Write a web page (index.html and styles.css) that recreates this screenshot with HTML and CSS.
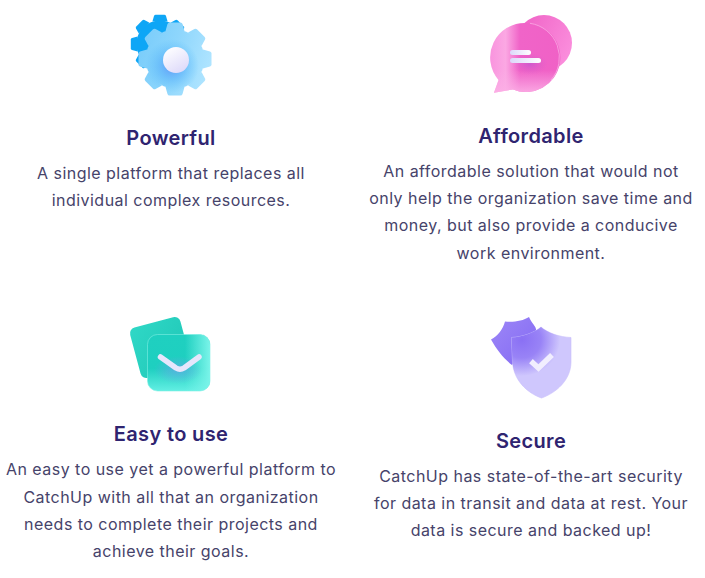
FILE: index.html
```html
<!DOCTYPE html>
<html lang="en">
<head>
<meta charset="utf-8">
<title>CatchUp features</title>
<link rel="stylesheet" href="styles.css">
</head>
<body>
<svg class="defs" width="0" height="0" aria-hidden="true">
  <defs>
    <g id="gearshape">
      <circle r="29.500"/>
      <g id="tooth"><path d="M-9.500 -28 L-7.500 -35 Q-7 -36.500 -5.500 -36.500 H5.500 Q7 -36.500 7.500 -35 L9.500 -28 Z"/></g>
      <use href="#tooth" transform="rotate(45)"/>
      <use href="#tooth" transform="rotate(90)"/>
      <use href="#tooth" transform="rotate(135)"/>
      <use href="#tooth" transform="rotate(180)"/>
      <use href="#tooth" transform="rotate(225)"/>
      <use href="#tooth" transform="rotate(270)"/>
      <use href="#tooth" transform="rotate(315)"/>
    </g>
    <linearGradient id="gFront" x1="0" y1="0" x2="1" y2="0.3">
      <stop offset="0" stop-color="#74cafa"/><stop offset=".55" stop-color="#8ed6fc"/><stop offset="1" stop-color="#aee4ff"/>
    </linearGradient>
    <radialGradient id="gGlow" cx="0.5" cy="0.5" r="0.5">
      <stop offset="0" stop-color="#5f94f8" stop-opacity=".95"/><stop offset=".5" stop-color="#5cb4fa" stop-opacity=".6"/><stop offset="1" stop-color="#5cc0fa" stop-opacity="0"/>
    </radialGradient>
    <linearGradient id="gHub" x1="0.2" y1="0" x2="0.8" y2="1">
      <stop offset="0" stop-color="#ffffff"/><stop offset="1" stop-color="#dcd8fa"/>
    </linearGradient>
    <mask id="mFrontGear"><use href="#gearshape" transform="translate(175 59)" fill="#fff"/></mask>

    <linearGradient id="cBack" x1="0" y1="0.2" x2="1" y2="0.7">
      <stop offset="0" stop-color="#ef62c6"/><stop offset="1" stop-color="#fb8fdd"/>
    </linearGradient>
    <linearGradient id="cFront" x1="0" y1="0" x2="1" y2="0">
      <stop offset="0" stop-color="#f994de"/><stop offset=".22" stop-color="#fba8e3"/><stop offset=".42" stop-color="#f064c8"/><stop offset="1" stop-color="#f061c6"/>
    </linearGradient>
    <linearGradient id="cFade" x1="0" y1="0" x2="0" y2="1">
      <stop offset=".68" stop-color="#fbb0e6" stop-opacity="0"/><stop offset="1" stop-color="#fcb0e6" stop-opacity=".9"/>
    </linearGradient>
    <radialGradient id="cGlow">
      <stop offset="0" stop-color="#b54fd0" stop-opacity=".55"/><stop offset="1" stop-color="#d458c8" stop-opacity="0"/>
    </radialGradient>
    <linearGradient id="cBar" x1="0" y1="0" x2="1" y2="0">
      <stop offset="0" stop-color="#dcd8fa"/><stop offset="1" stop-color="#ffffff"/>
    </linearGradient>

    <linearGradient id="eBack" x1="0" y1="0" x2="1" y2="1">
      <stop offset="0" stop-color="#2fd8c6"/><stop offset="1" stop-color="#1fc6b6"/>
    </linearGradient>
    <linearGradient id="eFront" x1="0" y1="0" x2="0" y2="1">
      <stop offset="0" stop-color="#1fd0c0"/><stop offset=".6" stop-color="#1ecfc0"/><stop offset="1" stop-color="#62efe3"/>
    </linearGradient>
    <linearGradient id="eSide" x1="0" y1="0" x2="1" y2="0">
      <stop offset=".6" stop-color="#7af4e9" stop-opacity="0"/><stop offset="1" stop-color="#7af4e9"/>
    </linearGradient>
    <radialGradient id="eGlow">
      <stop offset="0" stop-color="#6aa6e8" stop-opacity=".7"/><stop offset="1" stop-color="#6aa6e8" stop-opacity="0"/>
    </radialGradient>

    <linearGradient id="sBack" x1="0" y1="0" x2="1" y2="1">
      <stop offset="0" stop-color="#9d87f7"/><stop offset="1" stop-color="#8369f3"/>
    </linearGradient>
    <radialGradient id="sGlow">
      <stop offset="0" stop-color="#8a70f4"/><stop offset=".5" stop-color="#8f77f5" stop-opacity=".85"/><stop offset="1" stop-color="#8f77f5" stop-opacity="0"/>
    </radialGradient>
    <clipPath id="sClip"><path d="M541 327 C548 333 559 337 571 337.500 V362 C571 380 556 393 541.500 398 C527 393 513.500 380 512.500 362 L511.500 337.500 C522 337 534 333 541 327 Z"/></clipPath>
  </defs>
</svg>

<main class="features">
  <div class="column column-left">
    <article class="feature">
      <svg class="icon" viewBox="126 10 90 90" width="90" height="90" aria-hidden="true">
        <use href="#gearshape" transform="translate(160 44) scale(.8)" fill="#0ea6f6"/>
        <g mask="url(#mFrontGear)">
          <rect x="136" y="20" width="80" height="80" fill="url(#gFront)"/>
          <circle cx="172" cy="66" r="27" fill="url(#gGlow)"/>
        </g>
        <circle cx="176" cy="60" r="13" fill="url(#gHub)"/>
      </svg>
      <h2 class="title">Powerful</h2>
      <p class="text">A single platform that replaces all<br>individual complex resources.</p>
    </article>
    <article class="feature feature-easy">
      <svg class="icon" viewBox="126 306 90 90" width="90" height="90" aria-hidden="true">
        <rect x="134.500" y="321.500" width="52" height="52" rx="6" transform="rotate(-15 160.500 347.500)" fill="url(#eBack)"/>
        <rect x="147.500" y="334.500" width="62.500" height="56.500" rx="10" fill="url(#eFront)" stroke="#7feee3" stroke-width=".6"/>
        <rect x="147.500" y="334.500" width="62.500" height="56.500" rx="10" fill="url(#eSide)"/>
        <ellipse cx="178" cy="370" rx="24" ry="14" fill="url(#eGlow)"/>
        <path class="chevron" d="M160.500 357 L176 368 Q180 370.500 184 368 L199 357"/>
      </svg>
      <h2 class="title">Easy to use</h2>
      <p class="text">An easy to use yet a powerful platform to<br>CatchUp with all that an organization<br>needs to complete their projects and<br>achieve their goals.</p>
    </article>
  </div>
  <div class="column column-right">
    <article class="feature">
      <svg class="icon" viewBox="486 8 90 90" width="90" height="90" aria-hidden="true">
        <circle cx="544" cy="43" r="28" fill="url(#cBack)"/>
        <path d="M525.500 23 A34.500 34.500 0 1 1 513 89.500 L494 92.800 L498.500 80 A34.500 34.500 0 0 1 525.500 23 Z" fill="url(#cFront)"/>
        <path d="M525.500 23 A34.500 34.500 0 1 1 513 89.500 L494 92.800 L498.500 80 A34.500 34.500 0 0 1 525.500 23 Z" fill="url(#cFade)"/>
        <path d="M530 23.300 A34.500 34.500 0 0 1 551 80" fill="none" stroke="#fbb4e8" stroke-width=".7"/>
        <ellipse cx="530" cy="64" rx="18" ry="11" fill="url(#cGlow)"/>
        <rect x="510" y="50" width="21" height="5" rx="2.500" fill="url(#cBar)"/>
        <rect x="510" y="58" width="31" height="5" rx="2.500" fill="url(#cBar)"/>
      </svg>
      <h2 class="title">Affordable</h2>
      <p class="text">An affordable solution that would not<br>only help the organization save time and<br>money, but also provide a conducive<br>work environment.</p>
    </article>
    <article class="feature feature-secure">
      <svg class="icon" viewBox="486 313 90 90" width="90" height="90" aria-hidden="true">
        <path d="M505 321.500 C513 322.500 523 321 529 317 C532 324 537 327 536 331 L512 365 C503 358 497 350 491 339.500 C498 336 503 329 505 321.500 Z" fill="url(#sBack)"/>
        <path class="shield" d="M541 327 C548 333 559 337 571 337.500 V362 C571 380 556 393 541.500 398 C527 393 513.500 380 512.500 362 L511.500 337.500 C522 337 534 333 541 327 Z"/>
        <g clip-path="url(#sClip)">
          <ellipse cx="522" cy="340" rx="38" ry="36" fill="url(#sGlow)"/>
        </g>
        <path class="check" d="M533 363 L538.500 368 L550 357"/>
      </svg>
      <h2 class="title">Secure</h2>
      <p class="text">CatchUp has state-of-the-art security<br>for data in transit and data at rest. Your<br>data is secure and backed up!</p>
    </article>
  </div>
</main>
</body>
</html>
```
FILE: styles.css
```css
* { box-sizing: border-box; }
html, body { margin: 0; padding: 0; background: #fff; }
body { font-family: "Inter", "Noto Sans", sans-serif; }
.defs { position: absolute; }
.features { display: flex; gap: 18px; width: 705px; height: 578px; overflow: hidden; }
.column { display: flex; flex-direction: column; width: 342px; flex: none; }
.column-left { padding-top: 10px; }
.column-right { padding-top: 8px; }
.feature { display: flex; flex-direction: column; align-items: center; text-align: center; }
.feature-easy { margin-top: 92px; }
.feature-secure { margin-top: 46px; }
.icon { display: block; flex: none; }
.title { margin: 23px 0 7px; font-size: 20px; line-height: 30px; font-weight: 600; color: #2f2470; letter-spacing: .35px; }
.text { margin: 0; font-size: 16px; line-height: 27.200px; font-weight: 400; color: #46436a; white-space: nowrap; letter-spacing: .47px; }
.chevron { fill: none; stroke: #e6e6fc; stroke-width: 5.500; stroke-linecap: round; stroke-linejoin: round; }
.shield { fill: #cfc7fd; stroke: #c9bffb; stroke-width: .6; }
.check { fill: none; stroke: #f1eefe; stroke-width: 5.500; stroke-linecap: square; stroke-linejoin: miter; }
```
